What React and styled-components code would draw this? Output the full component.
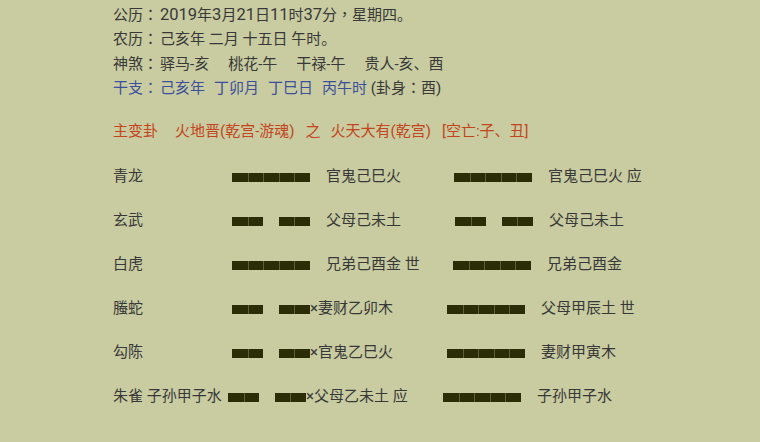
import React from "react";
import styled, { createGlobalStyle } from "styled-components";

const GlobalStyle = createGlobalStyle`
    html, body {
        margin: 0;
        padding: 0;
        background: #c8cca0;
    }
    body {
        font-family: Roboto, "Noto Sans CJK SC", sans-serif;
        color: #383838;
    }
`;

const rows = [
    { god: "青龙", left: "yang", mid: "官鬼己巳火", right: "yang", tail: "官鬼己巳火 应", midWidth: 128 },
    { god: "玄武", left: "yin", mid: "父母己未土", right: "yin", tail: "父母己未土", midWidth: 129 },
    { god: "白虎", left: "yang", mid: "兄弟己酉金 世", right: "yang", tail: "兄弟己酉金", midWidth: 127 },
    { god: "螣蛇", left: "yin", mid: "×妻财乙卯木", right: "yang", tail: "父母甲辰土 世", moving: true, midWidth: 137 },
    { god: "勾陈", left: "yin", mid: "×官鬼乙巳火", right: "yang", tail: "妻财甲寅木", moving: true, midWidth: 137 },
    { god: "朱雀 子孙甲子水", left: "yin", mid: "×父母乙未土 应", right: "yang", tail: "子孙甲子水", moving: true, midWidth: 137, godWidth: 115 },
];

function Yao({ kind }) {
    if (kind === "yang") {
        return (
            <YaoLine>
                {[0, 1, 2, 3, 4].map((i) => (
                    <Seg key={i} />
                ))}
            </YaoLine>
        );
    }
    return (
        <YaoLine>
            <SegGroup>
                <Seg />
                <Seg />
            </SegGroup>
            <SegGroup>
                <Seg />
                <Seg />
            </SegGroup>
        </YaoLine>
    );
}

export default function App() {
    return (
        <Page>
            <GlobalStyle />
            <InfoLine>
                <Label>公历<Punct>：</Punct></Label>
                <Num>2019</Num>年<Num>3</Num>月<Num>21</Num>日<Num>11</Num>时
                <Num>37</Num>分<Punct>，</Punct>星期四。
            </InfoLine>
            <InfoLine>
                <Label>农历<Punct>：</Punct></Label>己亥年 二月 十五日 午时。
            </InfoLine>
            <InfoLine>
                <Label>神煞<Punct>：</Punct></Label>
                <Spaced>驿马-亥</Spaced>
                <Spaced>桃花-午</Spaced>
                <Spaced>干禄-午</Spaced>
                <span>贵人-亥、酉</span>
            </InfoLine>
            <InfoLine>
                <Label blue>干支<Punct>：</Punct></Label>
                <Blue gap>己亥年</Blue>
                <Blue gap>丁卯月</Blue>
                <Blue gap>丁巳日</Blue>
                <Blue>丙午时</Blue> (卦身<Punct>：</Punct>酉)
            </InfoLine>
            <GuaTitle>
                <TitlePart gap={17}>主变卦</TitlePart>
                <TitlePart gap={11}>火地晋(乾宫-游魂)</TitlePart>
                <TitlePart gap={10}>之</TitlePart>
                <TitlePart gap={11}>火天大有(乾宫)</TitlePart>
                <TitlePart>[空亡:子、丑]</TitlePart>
            </GuaTitle>
            <Table>
                {rows.map((row) => (
                    <Row key={row.god}>
                        <God width={row.godWidth || 119}>{row.god}</God>
                        <Yao kind={row.left} />
                        <Mid width={row.midWidth} moving={row.moving}>
                            {row.mid}
                        </Mid>
                        <Yao kind={row.right} />
                        <Tail>{row.tail}</Tail>
                    </Row>
                ))}
            </Table>
        </Page>
    );
}

const Page = styled.div`
    padding: 2px 0 0 113px;
    font-size: 15px;
    min-height: 440px;
`;

const InfoLine = styled.div`
    line-height: 24.4px;
    height: 24.4px;
    white-space: nowrap;
`;

const Label = styled.span`
    display: inline-block;
    width: 47px;
    color: ${(props) => (props.blue ? "#3d4f9c" : "inherit")};
`;

const Punct = styled.span`
    font-family: "Noto Sans CJK TC", sans-serif;
`;

const Num = styled.span`
    font-size: 16.5px;
`;

const Spaced = styled.span`
    margin-right: 19px;
`;

const Blue = styled.span`
    color: #3d4f9c;
    margin-right: ${(props) => (props.gap ? "9px" : "0")};
`;

const GuaTitle = styled.div`
    display: flex;
    margin-top: 19px;
    line-height: 24px;
    color: #c4441e;
    white-space: nowrap;
`;

const TitlePart = styled.span`
    margin-right: ${(props) => props.gap || 0}px;
`;

const Table = styled.div`
    margin-top: 10px;
    display: flex;
    flex-direction: column;
`;

const Row = styled.div`
    display: flex;
    align-items: center;
    height: 44px;
    white-space: nowrap;
`;

const God = styled.span`
    width: ${(props) => props.width}px;
    flex-shrink: 0;
`;

const YaoLine = styled.span`
    display: flex;
    justify-content: space-between;
    width: 78px;
    margin-top: 5px;
    flex-shrink: 0;
`;

const SegGroup = styled.span`
    display: flex;
`;

const Seg = styled.span`
    width: 15.6px;
    height: 9px;
    background: #2b2d06;
    & + & {
        box-shadow: inset 1px 0 0 #5d6138;
    }
`;

const Mid = styled.span`
    width: ${(props) => props.width}px;
    margin-left: ${(props) => (props.moving ? 0 : 16)}px;
    flex-shrink: 0;
`;

const Tail = styled.span`
    margin-left: 16px;
`;
